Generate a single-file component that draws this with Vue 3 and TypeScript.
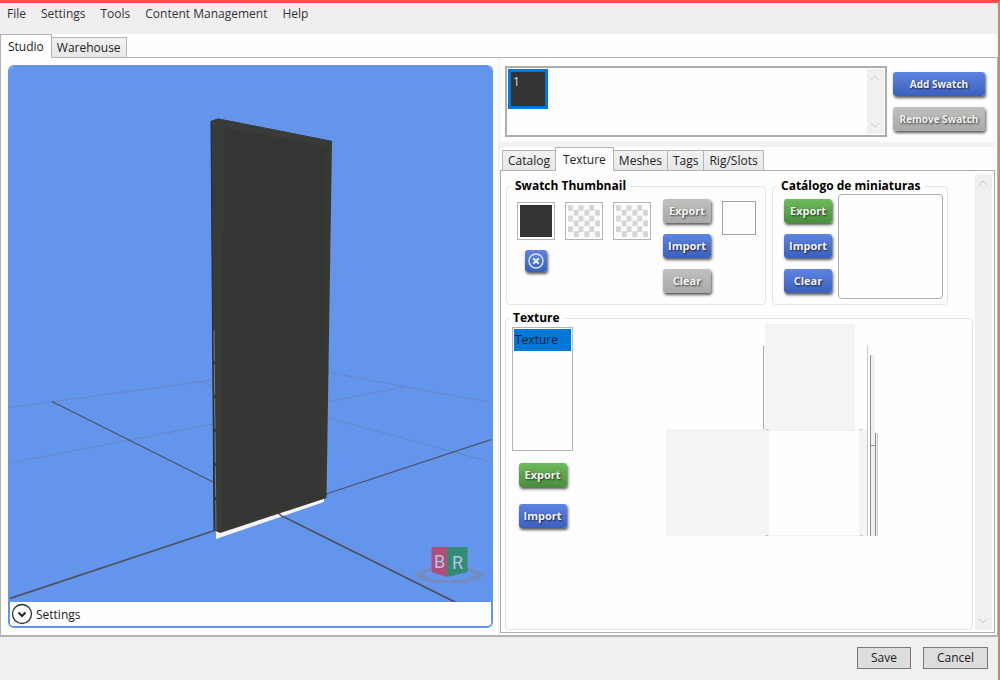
<script setup lang="ts">
import { ref } from 'vue'

const menus = ['File', 'Settings', 'Tools', 'Content Management', 'Help']
const pages = ['Studio', 'Warehouse']
const page = ref('Studio')
const sections = ['Catalog', 'Texture', 'Meshes', 'Tags', 'Rig/Slots']
const section = ref('Texture')
</script>

<template>
  <div class="window">
    <nav class="menubar" aria-label="Main menu">
      <button v-for="m in menus" :key="m" type="button">{{ m }}</button>
    </nav>

    <div class="tabs page-tabs" role="tablist">
      <button v-for="p in pages" :key="p" type="button" role="tab" :aria-selected="p === page" :class="{ active: p === page }" @click="page = p">{{ p }}</button>
    </div>

    <main class="workspace">
      <section class="viewport" aria-label="Preview">
        <svg class="scene" viewBox="10 67 481 535" preserveAspectRatio="xMidYMid slice">
          <g fill="none" stroke="#6685c4" stroke-width="1">
            <path d="M10 407.500L213 380M10 463L213 424M196 381L213 386M329 372.500L491 402.500M329 401.500L405 387M329 418L491 462" />
          </g>
          <g fill="none" stroke="#4b525c">
            <path stroke-width="1.300" d="M52 401.500L213 482M326 494L491 439.500" />
            <path stroke-width="1.800" d="M10 598.500L216 530M278 514L457 603" />
          </g>
          <path d="M216 530L324 497L324 502L216 539Z" fill="#f5f4f6" />
          <path d="M278 513L283 517" stroke="#4b525c" stroke-width="1.600" />
          <path d="M211 121L218 118.500L332 141L326.500 498L220 533L214 530Z" fill="#363834" />
          <path d="M211 121L218 118.500L332 141L331.500 147L224 127.500L222 531L214 530Z" fill="#393b38" />
          <path d="M224 128L325 147L320 496L222 529Z" fill="#343633" />
          <path d="M211 121L214 530" stroke="#292c30" stroke-width="1" />
          <path d="M214 330L216 530" stroke="#777b7b" stroke-width="1" stroke-dasharray="31 3" />
          <path fill="#708cc2" fill-rule="evenodd" d="M415 575a34 8.500 0 1 0 68 0a34 8.500 0 1 0 -68 0ZM424 574.500a25 5.500 0 1 0 50 0a25 5.500 0 1 0 -50 0Z" />
          <path d="M431.500 547H447V577L431.500 572Z" fill="#b34d78" />
          <path d="M447 547H467.500V572L447 577Z" fill="#338b76" />
          <g class="cube-label">
            <text x="434" y="568">B</text>
            <text x="452" y="569">R</text>
          </g>
        </svg>
        <button type="button" class="expander">
          <svg width="22" height="22" viewBox="0 0 22 22" fill="none">
            <circle cx="11" cy="11" r="9.500" stroke="#333" stroke-width="1.300" />
            <path d="M7.500 9.500L11 13L14.500 9.500" stroke="#222" stroke-width="2" />
          </svg>
          <span>Settings</span>
        </button>
      </section>

      <div class="editor">
        <section class="swatches">
          <div class="swatch-list">
            <button type="button" class="swatch">1</button>
            <div class="scrollbar">
              <svg viewBox="0 0 10 6"><path d="M1 5L5 1L9 5" /></svg>
              <svg viewBox="0 0 10 6"><path d="M1 1L5 5L9 1" /></svg>
            </div>
          </div>
          <div class="swatch-actions">
            <button type="button" class="btn blue">Add Swatch</button>
            <button type="button" class="btn" disabled>Remove Swatch</button>
          </div>
        </section>

        <div class="tabs section-tabs" role="tablist">
          <button v-for="s in sections" :key="s" type="button" role="tab" :aria-selected="s === section" :class="{ active: s === section }" @click="section = s">{{ s }}</button>
        </div>

        <div class="panel">
          <div class="panel-body">
            <div class="thumb-row">
              <fieldset class="swatch-group">
                <legend>Swatch Thumbnail</legend>
                <div class="thumbs">
                  <div class="thumb-column">
                    <div class="thumb dark"><i></i></div>
                    <button type="button" class="btn blue round-x" aria-label="Remove thumbnail">
                      <svg width="18" height="18" viewBox="0 0 18 18" fill="none" stroke="#e4e9f6">
                        <circle cx="9" cy="9" r="7" stroke-width="1.400" />
                        <path d="M6.200 6.200L11.800 11.800M11.800 6.200L6.200 11.800" stroke-width="2.200" />
                      </svg>
                    </button>
                  </div>
                  <div class="thumb checker"><i></i></div>
                  <div class="thumb checker"><i></i></div>
                </div>
                <div class="actions">
                  <button type="button" class="btn" disabled>Export</button>
                  <button type="button" class="btn blue">Import</button>
                  <button type="button" class="btn" disabled>Clear</button>
                </div>
                <div class="color-box"></div>
              </fieldset>

              <fieldset class="catalog-group">
                <legend>Catálogo de miniaturas</legend>
                <div class="actions">
                  <button type="button" class="btn green">Export</button>
                  <button type="button" class="btn blue">Import</button>
                  <button type="button" class="btn blue">Clear</button>
                </div>
                <div class="catalog-preview"></div>
              </fieldset>
            </div>

            <fieldset class="texture-group">
              <legend>Texture</legend>
              <div class="texture-side">
                <ul class="texture-list">
                  <li><button type="button">Texture</button></li>
                </ul>
                <button type="button" class="btn green">Export</button>
                <button type="button" class="btn blue">Import</button>
              </div>
              <svg class="texture-map" width="213" height="213" viewBox="666 326 213 213">
                <path fill="#f4f4f4" d="M765 327H855V432H765ZM666 431H769V538H666ZM859 432H867V538H859Z" />
                <path fill="#f0f0f0" d="M871 357H875V538H871ZM876 435H878V538H876ZM769 537H860V538H769ZM765 432H862V433H765ZM765 326H855V327H765Z" />
                <path fill="#a9a9a9" d="M763 348H764V431H763Z" />
                <path fill="#c9c9c9" d="M867 348H868V538H867ZM877 435H878V538H877ZM764 348H765V349H764ZM765 431H769V432H765ZM859 431H863V432H859ZM765 537H768V538H765ZM860 537H863V538H860Z" />
                <path fill="#8d8d8d" d="M870 357H871V538H870ZM875 435H876V538H875ZM871 447H875V448H871Z" />
              </svg>
            </fieldset>
          </div>
          <div class="scrollbar">
            <svg viewBox="0 0 10 6"><path d="M1 5L5 1L9 5" /></svg>
            <svg viewBox="0 0 10 6"><path d="M1 1L5 5L9 1" /></svg>
          </div>
        </div>
      </div>
    </main>

    <footer class="footer">
      <button type="button">Save</button>
      <button type="button">Cancel</button>
    </footer>
  </div>
</template>

<style>
body {
  margin: 0;
}
</style>

<style scoped>
.window,
.window * {
  box-sizing: border-box;
}

.window {
  display: flex;
  flex-direction: column;
  min-height: 100vh;
  border: solid #ff6e6e;
  border-width: 3px 2px 2px 0;
  border-top-color: #ff4a4e;
  background: #fefefe;
  color: #222;
  font: 12px/16px "Open Sans", "Noto Sans", sans-serif;
}

button {
  margin: 0;
  padding: 0;
  border: 0;
  background: none;
  color: inherit;
  font: inherit;
}

.menubar {
  display: flex;
  gap: 15px;
  height: 31px;
  padding: 3px 7px 0;
  background: #efefef;
  color: #333;
}

.menubar button {
  height: 16px;
}

.tabs {
  display: flex;
  align-items: flex-end;
  height: 24px;
  margin-bottom: -1px;
  position: relative;
}

.tabs button {
  height: 21px;
  margin-left: -1px;
  border: 1px solid #b4b4b4;
  background: linear-gradient(#f3f3f3, #e7e7e7);
  text-align: center;
}

.tabs .active {
  height: 24px;
  border-bottom: 0;
  background: #fefefe;
}

.page-tabs button {
  padding: 0 5px;
}

.page-tabs .active {
  margin-left: 0;
  padding: 0 7px;
}

.workspace {
  flex: 1;
  display: grid;
  grid-template-columns: minmax(0, 498fr) minmax(0, 500fr);
  border: solid #b4b4b4;
  border-width: 1px 1px 2px;
}

.viewport {
  display: flex;
  flex-direction: column;
  margin: 7px 5px 7px 7px;
  overflow: hidden;
  border: 2px solid #6495ed;
  border-radius: 6px;
}

.scene {
  display: block;
  flex: 1;
  width: 100%;
  height: 0;
  min-height: 300px;
  background: #6495ed;
}

.cube-label {
  fill: #b4c4e4;
  font: 18px "Liberation Sans Narrow", "Roboto", sans-serif;
}

.expander {
  display: flex;
  align-items: center;
  gap: 3px;
  height: 24px;
  padding-left: 1px;
  background: #fefefe;
}

.expander span {
  padding-top: 2px;
}

.editor {
  display: flex;
  flex-direction: column;
  padding: 0 2px 2px 0;
  border-left: 2px solid #f3f3f3;
}

.swatches {
  display: flex;
  gap: 6px;
  height: 89px;
  padding: 8px 10px 5px 5px;
  border-bottom: 5px solid #f3f3f3;
}

.swatch-list {
  flex: 1;
  display: flex;
  justify-content: space-between;
  height: 71px;
  padding: 1px;
  border: 2px solid #adadad;
}

.swatch {
  display: flex;
  width: 40px;
  height: 40px;
  padding: 2px;
  border: 3px solid #0078d7;
  background: #333;
  color: #ddd;
}

.scrollbar {
  display: flex;
  flex-direction: column;
  justify-content: space-between;
  align-items: center;
  width: 17px;
  padding: 6px 0;
  background: #f0f0f0;
}

.scrollbar svg {
  width: 10px;
  height: 6px;
  fill: none;
  stroke: #c6c6c6;
  stroke-width: 1;
}

.swatch-actions {
  display: flex;
  flex-direction: column;
  gap: 11px;
  width: 92px;
  padding-top: 6px;
}

.btn {
  height: 24px;
  border-radius: 3px;
  background: linear-gradient(#c0c1bf, #a9aaa8);
  box-shadow: 1px 2px 3px rgba(0, 0, 0, 0.65);
  color: #f3f3f3;
  font-size: 10px;
  font-weight: 700;
  line-height: 22px;
  text-align: center;
  text-shadow: 1px 1px 2px rgba(0, 0, 0, 0.7);
}

.blue {
  background: linear-gradient(#5f84e2, #3b5fbd);
}

.green {
  background: linear-gradient(#6dbb5b, #4a8e3e);
}

.section-tabs {
  padding-left: 3px;
}

.section-tabs button {
  padding: 0 5px;
}

.section-tabs .active {
  padding: 0 7px;
}

.panel {
  flex: 1;
  display: flex;
  gap: 2px;
  padding: 3px 2px 2px 4px;
  border: 1px solid #adadad;
}

.panel-body {
  flex: 1;
  display: flex;
  flex-direction: column;
  min-width: 0;
}

.thumb-row {
  display: flex;
  gap: 6px;
  padding: 4px 0 5px 1px;
}

fieldset {
  display: flex;
  min-width: 0;
  margin: 0;
  border: 1px solid #dbe5ed;
  border-radius: 4px;
}

legend {
  padding: 0 4px;
  color: #000;
  font-weight: 700;
}

.swatch-group {
  width: 260px;
  height: 127px;
  padding: 5px 9px 0 4px;
}

.thumbs {
  display: flex;
  gap: 10px;
  padding: 3px 0 0 6px;
}

.thumb-column {
  display: flex;
  flex-direction: column;
  align-items: center;
  gap: 10px;
}

.thumb {
  width: 38px;
  height: 38px;
  padding: 2px;
  border: 1px solid #b4b4bc;
}

.thumb i {
  display: block;
  height: 32px;
}

.dark i {
  background: #333;
}

.checker i {
  background: conic-gradient(#fbfbfb 25%, #d6d6d6 0 50%, #fbfbfb 0 75%, #d6d6d6 0) 0 0 / calc(100% / 3) calc(100% / 3);
}

.round-x {
  display: flex;
  align-items: center;
  justify-content: center;
  width: 22px;
  height: 22px;
}

.actions {
  display: flex;
  flex-direction: column;
  gap: 11px;
  width: 48px;
  margin-left: 12px;
}

.color-box {
  width: 34px;
  height: 34px;
  margin: 2px 0 0 11px;
  border: 1px solid #a3a3a3;
}

.catalog-group {
  width: 176px;
  height: 127px;
  padding: 0 4px 5px 0;
}

.catalog-group legend {
  margin-left: 4px;
}

.catalog-group .actions {
  padding-top: 5px;
  margin-left: 11px;
}

.catalog-preview {
  flex: 1;
  height: 105px;
  margin-left: 6px;
  border: 1px solid #adadad;
  border-radius: 4px;
}

.texture-group {
  flex: 1;
  padding: 0 93px 0 3px;
  justify-content: space-between;
}

.texture-side {
  display: flex;
  flex-direction: column;
  width: 61px;
  margin-left: 3px;
}

.texture-list {
  height: 124px;
  margin: 1px 0 12px;
  padding: 1px;
  border: 1px solid #b4b4bc;
  list-style: none;
}

.texture-list button {
  width: 100%;
  height: 22px;
  padding-left: 1px;
  background: #0078d7;
  color: #0b1f33;
  text-align: left;
}

.texture-side .btn {
  align-self: center;
  width: 48px;
  margin-bottom: 17px;
}

/* The texture sheet starts level with the legend's lower edge. */
.texture-map {
  margin-top: -2px;
}

.actions .btn,
.texture-side .btn {
  font-size: 11px;
}

.footer {
  display: flex;
  justify-content: flex-end;
  gap: 12px;
  height: 43px;
  padding: 10px;
  background: #f0f0f0;
}

.footer button {
  width: 65px;
  height: 22px;
  border: 1px solid #787878;
  background: #ddd;
}

.footer button:first-child {
  width: 54px;
}
</style>
